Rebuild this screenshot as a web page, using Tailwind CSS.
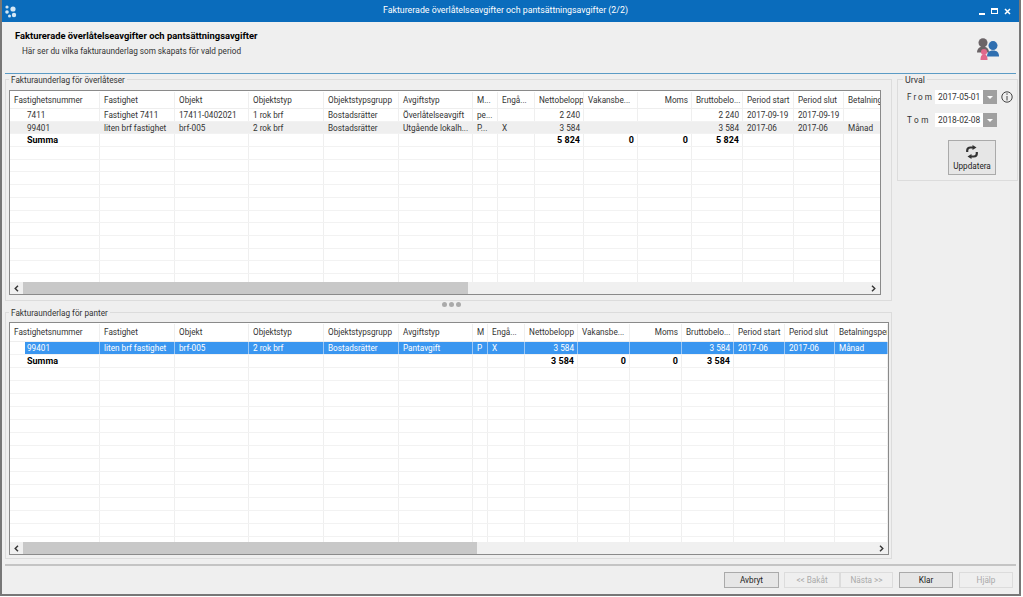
<!DOCTYPE html>
<html lang="sv">
<head>
  <meta charset="UTF-8" />
  <title>Fakturerade överlåtelseavgifter</title>
  <script src="https://cdn.jsdelivr.net/npm/@tailwindcss/browser@4"></script>
</head>
<body class="bg-white h-[597px] w-[1023px] overflow-hidden font-['Roboto',sans-serif] text-[8.2px] text-[#333]">
  <div class="w-[1021px] h-[596px] bg-[#efefef] border-x-[2px] border-b-[2px] border-[#777] flex flex-col">
    <!-- title bar -->
    <div class="h-[22px] bg-[#0a6cbc] flex items-center text-white shrink-0">
      <svg class="ml-[2px] w-[14px] h-[14px]" viewBox="0 0 14 14" fill="#d5e8f5"><circle cx="3" cy="3" r="1.6"/><circle cx="9" cy="5" r="2.6"/><circle cx="3" cy="8" r="1.800"/><circle cx="5.500" cy="12" r="1.500"/><circle cx="10" cy="11" r="2.200"/></svg>
      <div class="flex-1 text-center text-[8.8px] pl-[14px]">Fakturerade överlåtelseavgifter och pantsättningsavgifter (2/2)</div>
      <div class="flex items-center gap-[6px] pr-[8px]">
        <span class="w-[6px] h-[2px] mt-[6px] bg-white"></span>
        <span class="w-[7px] h-[6px] border border-t-[2px] border-white"></span>
        <svg class="w-[7px] h-[7px]" viewBox="0 0 7 7" stroke="white" stroke-width="1.500"><path d="M1 1l5 5M6 1l-5 5"/></svg>
      </div>
    </div>
    <!-- header -->
    <div class="h-[51px] px-[13px] pt-[8px] relative shrink-0">
      <div class="font-bold text-black text-[9.4px] leading-[12px]">Fakturerade överlåtelseavgifter och pantsättningsavgifter</div>
      <div class="pl-[7px] mt-[3px] leading-[12px]">Här ser du vilka fakturaunderlag som skapats för vald period</div>
      <svg class="absolute right-[19px] top-[15px] w-[24px] h-[24px]" viewBox="0 0 24 24">
        <circle cx="7" cy="5.700" r="4.500" fill="#6b6467"/><path d="M1 15.500c0-4 3-6 6-6s6 2 6 6z" fill="#6b6467"/>
        <circle cx="17" cy="8.600" r="4.500" fill="#2f6fb0"/><path d="M11 19.500c0-4 2-6 6-6s6 2 6 6z" fill="#2f6fb0"/>
        <circle cx="8" cy="15" r="3" fill="#e0688c"/><path d="M4.500 23c0-4 1-5.500 3.500-5.500s3.500 1.500 3.500 5.500z" fill="#e0688c"/>
      </svg>
    </div>
    <div class="h-[1px] mx-[3px] bg-[#5b9bc5] shrink-0"></div>
    <!-- main -->
    <div class="flex-1 flex gap-[5px] pl-[3px] pr-[1px] pt-[5px]">
      <div class="w-[887px] flex flex-col">
        <fieldset class="h-[222px] border border-[#dcdcdc] relative">
          <legend class="absolute -top-[5px] left-[3px] leading-[10px] px-[2px] bg-[#efefef]">Fakturaunderlag för överlåteser</legend>
          <div id="grid1" class="absolute left-[3px] top-[10px] w-[872px] h-[205px] bg-white border border-[#8a8a8a] overflow-hidden"></div>
        </fieldset>
        <div class="h-[11px] flex items-center justify-center gap-[2px] pb-[4px] pl-[6px]">
          <span class="w-[5px] h-[5px] rounded-full bg-[#aaa]"></span><span class="w-[5px] h-[5px] rounded-full bg-[#aaa]"></span><span class="w-[5px] h-[5px] rounded-full bg-[#aaa]"></span>
        </div>
        <fieldset class="h-[247px] border border-[#dcdcdc] relative">
          <legend class="absolute -top-[5px] left-[3px] leading-[10px] px-[2px] bg-[#efefef]">Fakturaunderlag för panter</legend>
          <div id="grid2" class="absolute left-[3px] top-[9px] w-[880px] h-[233px] bg-white border border-[#8a8a8a] overflow-hidden"></div>
        </fieldset>
      </div>
      <!-- urval -->
      <fieldset class="w-[121px] h-[102px] border border-[#dcdcdc] relative">
        <legend class="absolute -top-[5px] left-[5px] leading-[10px] px-[2px] text-[8.800px] bg-[#efefef]">Urval</legend>
        <div class="flex items-center absolute left-[9px] top-[10px]">
          <span class="w-[28px] tracking-[2px]">From</span>
          <span class="w-[48px] h-[14px] bg-white pl-[3px] leading-[14px] text-[8.400px]">2017-05-01</span>
          <span class="w-[14px] h-[14px] bg-[#a0a0a0] flex items-center justify-center"><span class="border-x-[3px] border-x-transparent border-t-[3px] border-t-white"></span></span>
          <svg class="w-[12px] h-[12px] ml-[4px]" viewBox="0 0 12 12" fill="none" stroke="#444"><circle cx="6" cy="6" r="5.200"/><path d="M6 5v4.500M6 2.300v1.500"/></svg>
        </div>
        <div class="flex items-center absolute left-[9px] top-[33px]">
          <span class="w-[28px] tracking-[2.500px]">Tom</span>
          <span class="w-[48px] h-[14px] bg-white pl-[3px] leading-[14px] text-[8.400px]">2018-02-08</span>
          <span class="w-[14px] h-[14px] bg-[#a0a0a0] flex items-center justify-center"><span class="border-x-[3px] border-x-transparent border-t-[3px] border-t-white"></span></span>
        </div>
        <button class="absolute left-[50px] top-[60px] w-[48px] h-[35px] border border-[#aaa] bg-[#e6e6e6] flex flex-col items-center pt-[4px] text-[#222]">
          <svg class="w-[14px] h-[14px] shrink-0" viewBox="0 0 14 14" fill="#333">
            <path d="M2.200 7V5.500a3 3 0 0 1 3-3h3" fill="none" stroke="#333" stroke-width="2.200"/><path d="M7.500 0l4 2.500-4 2.500z"/>
            <path d="M11.800 7v1.500a3 3 0 0 1-3 3h-3" fill="none" stroke="#333" stroke-width="2.200"/><path d="M6.500 14l-4-2.500 4-2.500z"/>
          </svg>
          <span class="leading-[12px] mt-[1px]">Uppdatera</span>
        </button>
      </fieldset>
    </div>
    <!-- footer -->
    <div class="h-[30px] mx-[3px] border-t-[2px] border-[#c4c4c4] flex justify-end items-start pt-[6px] pr-[3px] shrink-0">
      <button class="w-[55px] h-[16px] border border-[#aaa] bg-[#e6e6e6] text-[#222]">Avbryt</button>
      <button class="w-[56px] h-[16px] ml-[5px] border border-[#dcdcdc] text-[#aaa]">&lt;&lt; Bakåt</button>
      <button class="w-[53px] h-[16px] border border-[#dcdcdc] text-[#aaa]">Nästa &gt;&gt;</button>
      <button class="w-[54px] h-[16px] ml-[6px] border border-[#aaa] bg-[#e6e6e6] text-[#222]">Klar</button>
      <button class="w-[54px] h-[16px] ml-[6px] border border-[#dcdcdc] text-[#aaa]">Hjälp</button>
    </div>
  </div>

  <script>
    // text, column width, right aligned header, right aligned body
    const cols1 = [["Fastighetsnummer",90],["Fastighet",75],["Objekt",74],["Objektstyp",75],["Objektstypsgrupp",75],["Avgiftstyp",74],["M...",25],["Engå...",37],["Nettobelopp",49,1,1],["Vakansbe...",54,0,1],["Moms",54,1,1],["Bruttobelo...",51,1,1],["Period start",51],["Period slut",50],["Betalningsperiod",50]];
    const cols2 = [["Fastighetsnummer",90],["Fastighet",75],["Objekt",74],["Objektstyp",75],["Objektstypsgrupp",75],["Avgiftstyp",74],["M",15],["Engå...",37],["Nettobelopp",53,1,1],["Vakansbe...",52,0,1],["Moms",52,1,1],["Bruttobelo...",52,1,1],["Period start",51],["Period slut",50],["Betalningsperiod",53]];
    const rows1 = [
      ["7411","Fastighet 7411","17411-0402021","1 rok brf","Bostadsrätter","Överlåtelseavgift","pe...","","2 240","","","2 240","2017-09-19","2017-09-19",""],
      ["99401","liten brf fastighet","brf-005","2 rok brf","Bostadsrätter","Utgående lokalh...","P...","X","3 584","","","3 584","2017-06","2017-06","Månad"],
      ["Summa","","","","","","","","5 824","0","0","5 824","","",""]
    ];
    const rows2 = [
      ["99401","liten brf fastighet","brf-005","2 rok brf","Bostadsrätter","Pantavgift","P","X","3 584","","","3 584","2017-06","2017-06","Månad"],
      ["Summa","","","","","","","","3 584","0","0","3 584","","",""]
    ];

    function cell(text, w, right, cls) {
      return `<div class="shrink-0 h-full pl-[4px] pr-[3px] whitespace-nowrap overflow-hidden border-r leading-[12px] ${right ? "text-right" : ""} ${cls}" style="width:${w}px">${text}</div>`;
    }

    function buildGrid(el, cols, rows, total, headH, rowH, thumb, selected) {
      let html = `<div class="flex items-center pt-[1px] border-b border-[#eee]" style="height:${headH}px">` + cols.map(c => cell(c[0], c[1], c[2], "leading-[16px] border-[#efefef]")).join("") + `</div>`;
      for (let r = 0; r < total; r++) {
        const row = rows[r] || cols.map(() => "");
        const isSum = row[0] === "Summa";
        const isSel = selected && r === 0;
        const rowCls = isSel ? "bg-[#3a96f0] text-white" : (!selected && r === 1) ? "bg-[#efefef]" : "";
        html += `<div class="flex border-b border-[#f2f2f2] ${rowCls}" style="height:${rowH}px">` + row.map((t, i) => {
          let cls = isSel ? "border-[#9cc8f5]" : "border-[#efefef]";
          if (isSum) cls += " font-bold text-black text-[9px]";
          if (i === 0) cls += " pl-[17px]";
          if (i === 0 && isSel) cls += " bg-[linear-gradient(to_right,white_15px,#3a96f0_15px)]";
          return cell(t, cols[i][1], cols[i][3], cls);
        }).join("") + `</div>`;
      }
      html += `<div class="absolute left-0 right-0 bottom-0 h-[12px] bg-[#f0f0f0] flex items-center">
        <span class="w-[13px] flex justify-center"><svg class="w-[5px] h-[7px]" viewBox="0 0 5 7" fill="none" stroke="#333" stroke-width="1.400"><path d="M4 .8L1.200 3.500 4 6.200"/></svg></span>
        <span class="h-full bg-[#c8c8c8]" style="width:${thumb}px"></span>
        <span class="ml-auto w-[14px] flex justify-center"><svg class="w-[5px] h-[7px]" viewBox="0 0 5 7" fill="none" stroke="#333" stroke-width="1.400"><path d="M1 .8L3.800 3.500 1 6.200"/></svg></span>
      </div>`;
      el.innerHTML = html;
    }

    buildGrid(document.getElementById("grid1"), cols1, rows1, 15, 18, 12.7, 445, false);
    buildGrid(document.getElementById("grid2"), cols2, rows2, 16, 19, 13, 454, true);
  </script>
</body>
</html>
